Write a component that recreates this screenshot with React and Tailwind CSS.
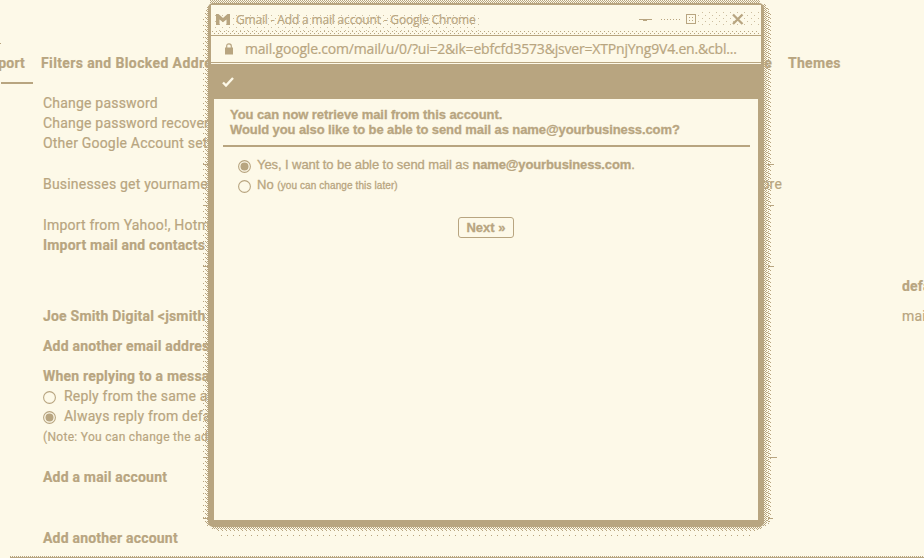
import React from "react";

const roboto = "font-[Roboto,sans-serif]";

function Radio({ checked }) {
  return (
    <svg className="relative top-px h-[13px] w-[13px] shrink-0" viewBox="0 0 13 13" fill="none">
      <circle cx="6.5" cy="6.5" r="5.9" stroke="#b8a580" strokeWidth="1.1" />
      {checked && <circle cx="6.5" cy="6.5" r="4" fill="#b8a580" />}
    </svg>
  );
}

function Page() {
  return (
    <div className={"flex h-full flex-col text-[14px] leading-5 tracking-[0.2px] whitespace-nowrap [-webkit-text-stroke:0.2px] " + roboto}>
      <div className="relative mt-[43px] h-0">
        <span className="absolute top-0 left-0 h-px w-px bg-[#b8a580]" />
      </div>
      <div className="flex h-[41px] pt-[10px] font-bold">
        <div className="flex w-[33px] flex-col justify-between">
          <span className="flex justify-end pr-[8px]">Support</span>
          <span className="ml-px h-[2px] bg-[#b8a580]" />
        </div>
        <span className="ml-2 w-[600px] tracking-[0.38px]">Filters and Blocked Addresses</span>
        <span className="w-[131px] text-right">Offline</span>
        <span className="ml-[16px] tracking-[0.3px]">Themes</span>
      </div>
      <div className="flex justify-between">
        <div className="flex flex-col pt-[9px] pl-[43px]">
          <span>Change password</span>
          <span>Change password recovery options</span>
          <span>Other Google Account settings</span>
          <div className="mt-[21px] flex w-[739px] justify-between">
            <span>Businesses get yourname</span>
            <span>Learn more</span>
          </div>
          <span className="mt-[21px]">Import from Yahoo!, Hotmail, AOL</span>
          <span className="font-bold">Import mail and contacts</span>
          <span className="mt-[51px] font-bold">Joe Smith Digital &lt;jsmith</span>
          <span className="mt-[10px] font-bold">Add another email address</span>
          <span className="mt-[10px] font-bold">When replying to a message:</span>
          <span className="flex items-center gap-2"><Radio />Reply from the same address</span>
          <span className="flex items-center gap-2"><Radio checked />Always reply from default</span>
          <span className="mt-px text-[12px] tracking-[0.3px]">(Note: You can change the address</span>
          <span className="mt-[20px] font-bold">Add a mail account</span>
          <span className="mt-[41px] font-bold">Add another account</span>
        </div>
        <div className="flex w-[22px] flex-col overflow-hidden pt-[192px]">
          <span className="font-bold">default</span>
          <span className="mt-[10px]">mail</span>
        </div>
      </div>
      <svg className="mt-[8px] ml-[10px] h-[2px] w-[914px]" shapeRendering="crispEdges">
        <path d="M0 .5H914" stroke="#b8a580" strokeDasharray="1 1" />
        <path d="M0 1.5H914" stroke="#b8a580" />
      </svg>
    </div>
  );
}

/* Stippled shadow that surrounds the popup window. */
function StippleShadow() {
  return (
    <svg className="absolute top-0 left-[200px] h-[540px] w-[580px]" shapeRendering="crispEdges">
      <defs>
        <pattern id="dense" width="2" height="2" patternUnits="userSpaceOnUse">
          <path d="M0 0h1v1h-1zM1 1h1v1h-1z" fill="#b8a580" />
        </pattern>
        <pattern id="medium" width="3" height="4" patternUnits="userSpaceOnUse">
          <path d="M0 0h1v1h-1zM2 0h1v1h-1zM1 1h1v1h-1zM2 2h1v1h-1zM1 3h1v1h-1z" fill="#b8a580" />
        </pattern>
        <pattern id="light" width="4" height="4" patternUnits="userSpaceOnUse">
          <path d="M0 0h1v1h-1zM2 2h1v1h-1zM1 1h1v1h-1z" fill="#b8a580" />
        </pattern>
        <pattern id="sparse" width="6" height="6" patternUnits="userSpaceOnUse">
          <path d="M3 1h1v1h-1z" fill="#b8a580" />
        </pattern>
      </defs>
      <rect x="10" y="0" width="550" height="3" fill="url(#dense)" />
      <rect x="3" y="14" width="3" height="508" fill="url(#sparse)" />
      <rect x="5" y="10" width="2" height="515" fill="url(#light)" />
      <rect x="7" y="6" width="2" height="520" fill="url(#dense)" />
      <rect x="563" y="4" width="3" height="522" fill="url(#dense)" />
      <rect x="566" y="8" width="3" height="516" fill="url(#medium)" />
      <rect x="569" y="12" width="2" height="510" fill="url(#light)" />
      <rect x="571" y="20" width="2" height="500" fill="url(#sparse)" />
      <rect x="12" y="526" width="550" height="3" fill="url(#dense)" />
      <rect x="15" y="529" width="543" height="3" fill="url(#light)" />
      <rect x="20" y="535" width="530" height="1" fill="url(#sparse)" />
      <path d="M3 164.500h5M3 205.500h5M3 266.500h5M3 457.500h5M3 518.500h5M568 164.500h6M568 205.500h6M568 266.500h6M568 457.500h9M568 518.500h5" stroke="#b8a580" />
    </svg>
  );
}

function TitleBar() {
  return (
    <div className="relative flex h-[31px] items-center border-b border-[#b8a580] pl-[5px]">
      <svg className="absolute inset-0 h-[30px] w-full" shapeRendering="crispEdges">
        <defs>
          <pattern id="speck" width="7" height="6" patternUnits="userSpaceOnUse">
            <path d="M1 1h1v1h-1zM4 4h1v1h-1z" fill="#b8a580" />
          </pattern>
        </defs>
        <rect x="2" y="8" width="266" height="18" fill="url(#speck)" opacity=".7" />
        <path d="M1 26.5H549" stroke="#b8a580" strokeDasharray="1 3" />
        <path d="M3 28.5H549" stroke="#b8a580" strokeDasharray="1 3" />
        <path d="M450 14.5H471" stroke="#b8a580" strokeDasharray="1 2" />
        <rect x="487" y="7" width="61" height="15" fill="url(#speck)" opacity=".7" />
      </svg>
      <svg className="relative -top-px h-[11px] w-[14px]" viewBox="0 0 14 11" fill="#b8a580">
        <path d="M0 0h2.5L7 4 11.500 0H14v11h-3.500V5.500L7 8.300 3.500 5.500V11H0z" />
      </svg>
      <span className="relative ml-[6px] font-['Open_Sans',sans-serif] text-[12px] leading-4 tracking-[-0.17px] [-webkit-text-stroke:0.2px]">
        Gmail - Add a mail account - Google Chrome
      </span>
      <svg className="relative -top-px mr-[17px] ml-auto h-[13px] w-[105px]" viewBox="0 0 105 13" fill="none" stroke="#b8a580" shapeRendering="crispEdges">
        <path d="M0 6.500h13M4 7.500h4" />
        <rect x="47.500" y="1.500" width="9" height="9" fill="#fdf9e8" />
        <path d="M50 4.500h1m2 0h1m-4 3h1m2 0h1" />
        <path d="M94 1.500l9.500 9.500M103.500 1.500L94 11" strokeWidth="2.300" shapeRendering="auto" />
      </svg>
    </div>
  );
}

function Popup() {
  return (
    <div className="absolute top-[3px] left-[208px] flex h-[524px] w-[556px] flex-col overflow-hidden rounded-[5px] bg-[#b8a580] whitespace-nowrap">
      <div className="mx-[3px] mt-[2px] h-[59px] shrink-0 bg-[#fdf9e8]">
        <TitleBar />
        <div className="flex h-[27px] items-center border-b border-[#b8a580] pl-[14px]">
          <svg className="h-[12px] w-[8px]" viewBox="0 0 8 12">
            <rect y="4.500" width="8" height="7" fill="#b8a580" />
            <path d="M1.700 5V3Q1.700.8 4 .8T6.300 3v2" fill="none" stroke="#b8a580" strokeWidth="1.200" />
          </svg>
          <span className="ml-[12px] font-['Open_Sans',sans-serif] text-[14px] leading-5 tracking-[-0.19px] [-webkit-text-stroke:0.2px]">
            mail.google.com/mail/u/0/?ui=2&amp;ik=ebfcfd3573&amp;jsver=XTPnjYng9V4.en.&amp;cbl...
          </span>
        </div>
      </div>
      <div className="flex h-[35px] shrink-0 items-center pl-[14px]">
        <svg className="h-[10px] w-[12px]" viewBox="0 0 12 10">
          <path d="M1 5.500l3 3L11 1" fill="none" stroke="#fdf9e8" strokeWidth="2.400" />
        </svg>
      </div>
      <div className="mr-[6px] mb-[7px] ml-[6px] flex flex-1 flex-col bg-[#fdf9e8] pr-[8px] pl-[9px] font-['Liberation_Sans',Arial,sans-serif] text-[13px] [-webkit-text-stroke:0.3px]">
        <div className="flex h-[48px] flex-col border-b-2 border-[#b8a580] pt-[8px] pl-[7px] leading-[15px] font-bold">
          <span className="tracking-[-0.08px]">You can now retrieve mail from this account.</span>
          <span className="tracking-[-0.09px]">Would you also like to be able to send mail as name@yourbusiness.com?</span>
        </div>
        <div className="mt-[8px] flex h-5 items-center gap-[6px] pl-[15px]">
          <Radio checked />
          <span className="tracking-[-0.08px]">Yes, I want to be able to send mail as <b className="tracking-[-0.13px]">name@yourbusiness.com</b>.</span>
        </div>
        <div className="flex h-5 items-center gap-[6px] pl-[15px]">
          <Radio />
          <span>No <span className="text-[10px] tracking-[0.1px]">(you can change this later)</span></span>
        </div>
        <div className="mt-[22px] ml-[235px] flex h-[21px] w-[56px] items-center justify-center rounded-[3px] border border-[#b8a580] font-bold">
          Next »
        </div>
      </div>
    </div>
  );
}

export default function App() {
  return (
    <div className="relative h-[558px] w-[924px] overflow-hidden bg-[#fdf9e8] text-[#b8a580]">
      <Page />
      <StippleShadow />
      <Popup />
    </div>
  );
}
